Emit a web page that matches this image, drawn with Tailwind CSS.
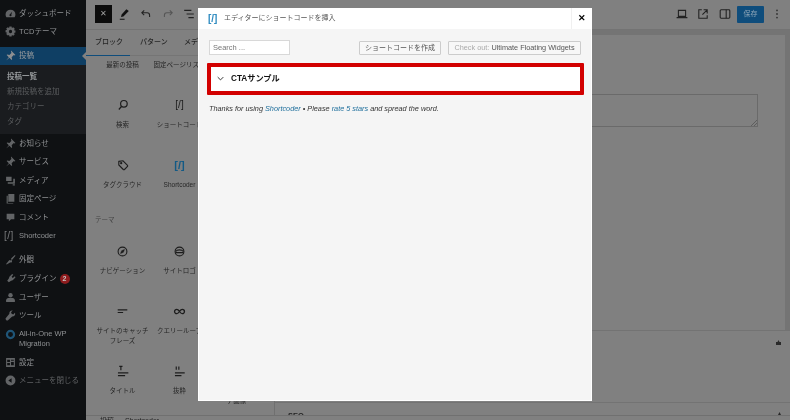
<!DOCTYPE html>
<html lang="ja">
<head>
<meta charset="utf-8">
<script src="https://cdn.jsdelivr.net/npm/@tailwindcss/browser@4"></script>
<title>Shortcoder</title>
</head>
<body class="m-0 overflow-hidden">
<div class="relative w-[790px] h-[420px] flex overflow-hidden bg-[#808080] font-['Liberation_Sans','Noto_Sans_CJK_JP',sans-serif] blur-[0.35px]">

    <!-- Admin menu -->
    <aside class="w-[86px] h-full shrink-0 bg-[#0f1113] text-[#8f9193] text-[7.5px] leading-none pt-[4px]">
        <div class="h-[18.5px] flex items-center gap-[3px] pl-[5px]">
            <svg class="w-[11px] h-[11px]" viewBox="0 0 20 20" fill="#626466"><path d="M10 3a9 9 0 0 0-9 9c0 2 .7 3.500 1.500 5h15c.8-1.500 1.500-3 1.500-5a9 9 0 0 0-9-9zm0 12a2 2 0 0 1-1-3.700L13 7l-1.500 5A2 2 0 0 1 10 15z"/></svg>
            <span>ダッシュボード</span>
        </div>
        <div class="h-[18.5px] flex items-center gap-[3px] pl-[5px]">
            <svg class="w-[11px] h-[11px]" viewBox="0 0 20 20" fill="#626466"><path d="M8 1h4l.6 2.800 2.400-1.500 2.800 2.800-1.500 2.400 2.700.5v4l-2.700.6 1.500 2.400-2.800 2.800-2.400-1.500-.6 2.700H8l-.6-2.700L5 17.300 2.200 14.500l1.500-2.400L1 11.500v-4l2.700-.5-1.500-2.400L5 2.300l2.400 1.500zm2 6a3 3 0 1 0 0 6 3 3 0 0 0 0-6z"/></svg>
            <span>TCDテーマ</span>
        </div>
        <div class="relative h-[18.500px] mt-[5.500px] flex items-center gap-[3px] pl-[5px] bg-[#0f3f64] text-[#9a9c9e]">
            <svg class="w-[11px] h-[11px]" viewBox="0 0 20 20" fill="#8d8f91"><path d="M11 1l8 8-2 1-1-1-4 4 1 4-1 1-4-4-6 5 5-6-4-4 1-1 4 1 4-4-1-1z"/></svg>
            <span>投稿</span>
            <span class="absolute right-0 top-[5px] w-0 h-0 border-y-[4.500px] border-y-transparent border-r-[4.500px] border-r-[#808080]"></span>
        </div>
        <div class="bg-[#1a1c1f] pt-[4px] h-[69px] pl-[7px] text-[#5a5c5e]">
            <div class="h-[15px] flex items-center font-bold text-[#979a9c]">投稿一覧</div>
            <div class="h-[15px] flex items-center">新規投稿を追加</div>
            <div class="h-[15px] flex items-center">カテゴリー</div>
            <div class="h-[15px] flex items-center">タグ</div>
        </div>
        <div class="h-[18.500px] flex items-center gap-[3px] pl-[5px]">
            <svg class="w-[11px] h-[11px]" viewBox="0 0 20 20" fill="#626466"><path d="M11 1l8 8-2 1-1-1-4 4 1 4-1 1-4-4-6 5 5-6-4-4 1-1 4 1 4-4-1-1z"/></svg>
            <span>お知らせ</span>
        </div>
        <div class="h-[18.500px] flex items-center gap-[3px] pl-[5px]">
            <svg class="w-[11px] h-[11px]" viewBox="0 0 20 20" fill="#626466"><path d="M11 1l8 8-2 1-1-1-4 4 1 4-1 1-4-4-6 5 5-6-4-4 1-1 4 1 4-4-1-1z"/></svg>
            <span>サービス</span>
        </div>
        <div class="h-[18.500px] flex items-center gap-[3px] pl-[5px]">
            <svg class="w-[11px] h-[11px]" viewBox="0 0 20 20" fill="#626466"><path d="M2 3h10v8H2zM5 13h10V7h3v9H5zM14 17h4v2h-4z"/></svg>
            <span>メディア</span>
        </div>
        <div class="h-[18.500px] flex items-center gap-[3px] pl-[5px]">
            <svg class="w-[11px] h-[11px]" viewBox="0 0 20 20" fill="#626466"><path d="M6 2h11v14H6zM3 5h2v13h10v1H3z"/></svg>
            <span>固定ページ</span>
        </div>
        <div class="h-[18.500px] flex items-center gap-[3px] pl-[5px]">
            <svg class="w-[11px] h-[11px]" viewBox="0 0 20 20" fill="#626466"><path d="M3 3h14v10h-6l-4 4v-4H3z"/></svg>
            <span>コメント</span>
        </div>
        <div class="h-[18.500px] flex items-center gap-[3px] pl-[4px]">
            <span class="w-[12px] text-[10px] tracking-[0.5px] text-[#7a7c7e]">[/]</span>
            <span>Shortcoder</span>
        </div>
        <div class="h-[18.500px] mt-[5.500px] flex items-center gap-[3px] pl-[5px]">
            <svg class="w-[11px] h-[11px]" viewBox="0 0 20 20" fill="#626466"><path d="M18 2l-7 6 1 2-2 2-2-1-6 7 1 1 7-4 1 1 2-2-1-2 7-9z"/></svg>
            <span>外観</span>
        </div>
        <div class="h-[18.500px] mt-[0.500px] flex items-center gap-[3px] pl-[5px]">
            <svg class="w-[11px] h-[11px]" viewBox="0 0 20 20" fill="#626466"><path d="M13 2l2 1-3 4 2 2 4-3 1 2-5 5-3 1-4 3-3-3 3-4 1-3z"/></svg>
            <span>プラグイン</span>
            <span class="w-[10px] h-[10px] rounded-full bg-[#8e1c1e] text-[#c4c4c4] text-[7px] font-bold flex items-center justify-center">2</span>
        </div>
        <div class="h-[18.500px] flex items-center gap-[3px] pl-[5px]">
            <svg class="w-[11px] h-[11px]" viewBox="0 0 20 20" fill="#626466"><circle cx="10" cy="6" r="4"/><path d="M2 18v-3c0-2 2-4 4-4h8c2 0 4 2 4 4v3z"/></svg>
            <span>ユーザー</span>
        </div>
        <div class="h-[18.500px] flex items-center gap-[3px] pl-[5px]">
            <svg class="w-[11px] h-[11px]" viewBox="0 0 20 20" fill="#626466"><path d="M18 5l-3 3-3-1-1-3 3-3a5 5 0 0 0-6 6L2 14a2.500 2.500 0 0 0 4 4l7-6a5 5 0 0 0 5-7z"/></svg>
            <span>ツール</span>
        </div>
        <div class="flex gap-[3px] pl-[5px] pt-[4px] h-[28px]">
            <svg class="w-[11px] h-[11px]" viewBox="0 0 20 20" fill="none" stroke="#1f5577" stroke-width="4"><circle cx="10" cy="10" r="6.500"/></svg>
            <span class="leading-[10px]">All-in-One WP<br>Migration</span>
        </div>
        <div class="h-[18.500px] flex items-center gap-[3px] pl-[5px]">
            <svg class="w-[11px] h-[11px]" viewBox="0 0 20 20" fill="#626466"><path d="M2 2h16v16H2zm2 3v4h5V5zm7 0v2h5V5zm0 4v6h5V9zm-7 2v4h5v-4z"/></svg>
            <span>設定</span>
        </div>
        <div class="h-[18.500px] flex items-center gap-[3px] pl-[5px] text-[#5f6163]">
            <svg class="w-[11px] h-[11px]" viewBox="0 0 20 20" fill="#626466"><path d="M10 1a9 9 0 1 0 0 18 9 9 0 0 0 0-18zm2 5v8l-6-4z"/></svg>
            <span>メニューを閉じる</span>
        </div>
    </aside>

    <!-- Editor behind the dialog -->
    <main class="flex-1 min-w-0 flex flex-col text-[#1f1f1f]">
        <div class="h-[30px] flex items-center pb-[2px] pl-[9px] pr-[8px] shrink-0 border-b border-[#737373]">
            <div class="w-[17px] h-[18px] bg-[#0c0c0c] text-[#a0a0a0] text-[8px] flex items-center justify-center">✕</div>
            <svg class="w-[12px] h-[12px] ml-[6px]" viewBox="0 0 20 20" fill="#111"><path d="M14 2l4 3-9 9-4 1 1-4zM3 18h8v1.500H3z"/></svg>
            <svg class="w-[12px] h-[12px] ml-[10px]" viewBox="0 0 20 20" fill="none" stroke="#222" stroke-width="1.800"><path d="M7 4L3 8l4 4M3 8h9c3 0 4 2 4 4v3"/></svg>
            <svg class="w-[12px] h-[12px] ml-[10px]" viewBox="0 0 20 20" fill="none" stroke="#555" stroke-width="1.800"><path d="M13 4l4 4-4 4M17 8H8c-3 0-4 2-4 4v3"/></svg>
            <svg class="w-[12px] h-[12px] ml-[9px]" viewBox="0 0 20 20" fill="none" stroke="#222" stroke-width="2"><path d="M2 4h12M6 10h12M9 16h9"/></svg>
            <div class="ml-auto mt-[1px] flex items-center">
                <svg class="w-[12px] h-[12px]" viewBox="0 0 20 20" fill="none" stroke="#222" stroke-width="1.800"><path d="M4 4h12v10H4zM1 16h18"/></svg>
                <svg class="w-[12px] h-[12px] ml-[9px]" viewBox="0 0 20 20" fill="none" stroke="#222" stroke-width="1.800"><path d="M8 3H3v14h14v-5M11 3h6v6M17 3l-8 8"/></svg>
                <svg class="w-[12px] h-[12px] ml-[10px]" viewBox="0 0 20 20" fill="none" stroke="#222" stroke-width="1.800"><rect x="2" y="3" width="16" height="14" rx="1.500"/><path d="M12 3v14"/></svg>
                <div class="w-[27px] h-[17px] ml-[6px] bg-[#0f4d7c] rounded-[1px] text-[#8fa6b8] text-[7px] flex items-center justify-center">保存</div>
                <svg class="w-[10px] h-[12px] ml-[8px]" viewBox="0 0 10 20" fill="#333"><circle cx="5" cy="4" r="1.500"/><circle cx="5" cy="10" r="1.500"/><circle cx="5" cy="16" r="1.500"/></svg>
            </div>
        </div>

        <div class="flex-1 flex min-h-0">
            <!-- Block inserter -->
            <div class="w-[189px] shrink-0 border-r border-[#707070] overflow-hidden text-[6.5px] text-[#262626]">
                <div class="h-[26px] flex border-b border-[#757575] text-[7px] font-medium">
                    <div class="w-[44px] pl-[9px] h-[26px] flex items-center border-b border-[#0f4d7c]">ブロック</div>
                    <div class="pl-[10px] w-[54px] flex items-center">パターン</div>
                    <div class="flex items-center whitespace-nowrap">メディア</div>
                </div>
                <div class="grid grid-cols-[57px_57px_57px] pl-[8px] text-center leading-[10px]">
                    <div class="h-[39px] pt-[4px]">最新の投稿</div>
                    <div class="h-[39px] pt-[4px]">固定ページリスト</div>
                    <div class="h-[39px]"></div>
                </div>
                <div class="grid grid-cols-[57px_57px_57px] auto-rows-[60px] pl-[8px] text-center leading-[10px]">
                    <div>
                        <div class="h-[20px] flex items-center justify-center"><svg class="w-[12px] h-[12px]" viewBox="0 0 20 20" fill="none" stroke="#1c1c1c" stroke-width="2"><circle cx="11.500" cy="8" r="5.500"/><path d="M7.500 12.500L3 17.500"/></svg></div>
                        <div class="mt-[5px]">検索</div>
                    </div>
                    <div>
                        <div class="h-[20px] flex items-center justify-center text-[10px] text-[#1c1c1c] font-medium">[/]</div>
                        <div class="mt-[5px] whitespace-nowrap">ショートコード</div>
                    </div>
                    <div></div>
                    <div>
                        <div class="h-[20px] flex items-center justify-center"><svg class="w-[12px] h-[12px]" viewBox="0 0 20 20" fill="none" stroke="#1c1c1c" stroke-width="1.800"><path d="M3 4l7-1 7.500 7.500a1.500 1.500 0 0 1 0 2l-5 5a1.500 1.500 0 0 1-2 0L3 10z"/><circle cx="7" cy="7" r="1"/></svg></div>
                        <div class="mt-[5px]">タグクラウド</div>
                    </div>
                    <div>
                        <div class="h-[20px] flex items-center justify-center text-[11px] text-[#135a85] font-bold">[/]</div>
                        <div class="mt-[5px]">Shortcoder</div>
                    </div>
                    <div></div>
                </div>
                <div class="h-[26px] pl-[9px] text-[#444] leading-[10px]">テーマ</div>
                <div class="grid grid-cols-[57px_57px_57px] auto-rows-[60px] pl-[8px] text-center leading-[10px]">
                    <div>
                        <div class="h-[20px] flex items-center justify-center"><svg class="w-[11px] h-[11px]" viewBox="0 0 20 20" fill="none" stroke="#1c1c1c" stroke-width="2"><circle cx="10" cy="10" r="8"/><path d="M13.500 6.500L8.500 8.500 6.500 13.500 11.500 11.500z" fill="#1c1c1c" stroke-width="1"/></svg></div>
                        <div class="mt-[5px] whitespace-nowrap">ナビゲーション</div>
                    </div>
                    <div>
                        <div class="h-[20px] flex items-center justify-center"><svg class="w-[11px] h-[11px]" viewBox="0 0 20 20" fill="none" stroke="#1c1c1c" stroke-width="2"><circle cx="10" cy="10" r="8"/><path d="M3 10c3-4 11-4 14 0M3 12h14"/></svg></div>
                        <div class="mt-[5px]">サイトロゴ</div>
                    </div>
                    <div></div>
                    <div>
                        <div class="h-[20px] flex items-center justify-center"><svg class="w-[13px] h-[12px]" viewBox="0 0 20 20" fill="none" stroke="#1c1c1c" stroke-width="2"><path d="M2 8h16M2 12.500h9"/></svg></div>
                        <div class="mt-[5px] px-[2px]">サイトのキャッチフレーズ</div>
                    </div>
                    <div>
                        <div class="h-[20px] flex items-center justify-center"><svg class="w-[13px] h-[11px]" viewBox="0 0 20 20" fill="none" stroke="#1c1c1c" stroke-width="2.400"><path d="M10 10c-2-3-3.500-4-5-4a4 4 0 0 0 0 8c1.500 0 3-1 5-4s3.500-4 5-4a4 4 0 0 1 0 8c-1.500 0-3-1-5-4z"/></svg></div>
                        <div class="mt-[5px] whitespace-nowrap">クエリーループ</div>
                    </div>
                    <div></div>
                    <div>
                        <div class="h-[20px] flex items-center justify-center"><svg class="w-[13px] h-[14px]" viewBox="0 0 20 20" fill="none" stroke="#1c1c1c" stroke-width="1.800"><path d="M3 13h16M3 17h11M5 3h5M7.500 3v6"/></svg></div>
                        <div class="mt-[5px]">タイトル</div>
                    </div>
                    <div>
                        <div class="h-[20px] flex items-center justify-center"><svg class="w-[13px] h-[14px]" viewBox="0 0 20 20" fill="none" stroke="#1c1c1c" stroke-width="1.800"><path d="M3 13h15M3 17h10M5 3v5M9 3v5"/></svg></div>
                        <div class="mt-[5px]">抜粋</div>
                    </div>
                    <div>
                        <div class="h-[20px]"></div>
                        <div class="mt-[5px]">投稿のアイキャッチ画像</div>
                    </div>
                </div>
            </div>

            <!-- Post canvas and settings -->
            <div class="flex-1 min-w-0 flex flex-col overflow-hidden">
                <div class="h-[5px] shrink-0 bg-[#747474]"></div>
                <div class="h-[295px] shrink-0 flex">
                    <div class="flex-1 min-w-0 pt-[59px] pl-[6px] pr-[27px]">
                        <div class="relative h-[33px] border border-[#6a6a6a]">
                            <svg class="absolute right-0 bottom-0 w-[6px] h-[6px]" viewBox="0 0 6 6" stroke="#555" stroke-width="0.800"><path d="M0 6l6-6M3 6l3-3"/></svg>
                        </div>
                    </div>
                    <div class="w-[5px] shrink-0 bg-[#747474]"></div>
                </div>
                <div class="h-[72px] shrink-0 border-t border-[#737373] flex justify-end pr-[9px] pt-[9px]">
                    <svg class="w-[5px] h-[5px]" viewBox="0 0 10 10" fill="#2a2a2a"><path d="M5 0l2 4h3v6H0V4h3z"/></svg>
                </div>
                <div class="flex-1 border-t border-[#737373] overflow-hidden flex justify-between pl-[13px] pr-[9px]">
                    <span class="text-[7.500px] font-bold leading-[10px] mt-[8px]">SEO</span>
                    <svg class="w-[3px] h-[3px] mt-[9px]" viewBox="0 0 10 10" fill="#2a2a2a"><path d="M5 0l5 10H0z"/></svg>
                </div>
            </div>
        </div>

        <!-- Breadcrumb bar -->
        <div class="h-[5px] shrink-0 border-t border-[#707070] overflow-hidden pl-[14px] text-[7px] text-[#222] leading-[10px]">投稿 → Shortcoder</div>
    </main>

    <!-- Shortcoder dialog -->
    <div class="absolute left-[198px] top-[8px] w-[394px] h-[393px] bg-[#f5f5f5] shadow-[inset_0_0_0_1px_#fff] text-[#333]">
        <div class="h-[21px] bg-white flex items-center pl-[10px] text-[7px] text-[#555]">
            <span class="text-[10px] text-[#2e8bc0] font-bold w-[14px]">[/]</span>
            <span class="ml-[2px]">エディターにショートコードを挿入</span>
            <span class="ml-auto w-[21px] h-[21px] border-l border-[#f0f0f0] flex items-center justify-center text-[9px] text-black font-bold">✕</span>
        </div>
        <div class="flex items-start pl-[11px] pr-[11px] pt-[11px]">
            <div class="w-[81px] h-[15px] bg-white border border-[#d8d8d8] text-[7.500px] text-[#777] flex items-center pl-[3px]">Search ...</div>
            <div class="ml-auto mt-[1px] h-[14px] w-[82px] bg-[#f7f7f7] border border-[#ccc] rounded-[1px] text-[7px] text-[#555] flex items-center justify-center">ショートコードを作成</div>
            <div class="ml-[7px] mt-[1px] h-[14px] w-[133px] bg-[#f7f7f7] border border-[#ccc] rounded-[1px] text-[7.300px] text-[#555] flex items-center justify-center whitespace-nowrap"><span class="text-[#aaa]">Check out:&nbsp;</span>Ultimate Floating Widgets</div>
        </div>
        <div class="ml-[9px] w-[377px] mt-[8px] h-[32px] bg-white border-[4px] border-[#d20000] rounded-[1px] flex items-center pl-[6px]">
            <svg class="w-[7px] h-[7px] -mt-[1px]" viewBox="0 0 10 10" fill="none" stroke="#333" stroke-width="1.400"><path d="M1 3l4 4 4-4"/></svg>
            <span class="ml-[7px] text-[8.200px] font-bold text-[#111]">CTAサンプル</span>
        </div>
        <p class="mt-[9px] pl-[11px] text-[7.300px] italic text-[#333]">Thanks for using <span class="text-[#1f6f9c]">Shortcoder</span> • Please <span class="text-[#1f6f9c]">rate 5 stars</span> and spread the word.</p>
    </div>
</div>
</body>
</html>
